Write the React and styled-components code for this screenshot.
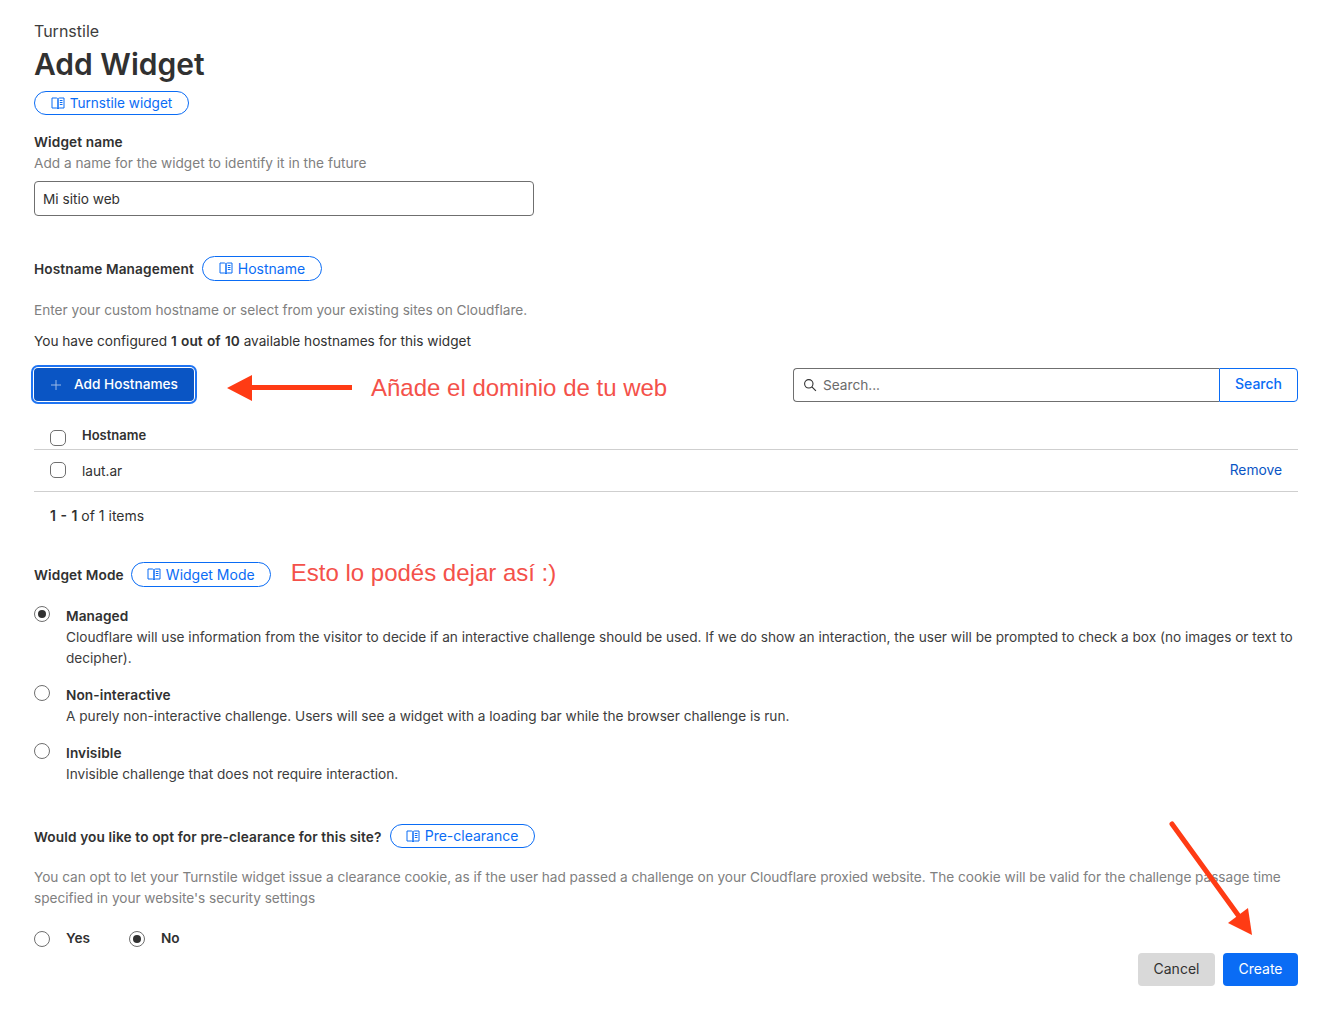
import React from "react";
import styled, { createGlobalStyle } from "styled-components";

const GlobalStyle = createGlobalStyle`
  html, body {
    margin: 0;
    padding: 0;
    background: #fff;
  }
  body {
    font-family: Inter, "Liberation Sans", sans-serif;
    font-size: 13.65px;
    line-height: 21px;
    color: #313131;
  }
`;

const Page = styled.main`
  position: relative;
  width: 1331px;
  height: 1015px;
  box-sizing: border-box;
  padding: 21px 33px 0 34px;
  overflow: hidden;
`;

const Crumb = styled.div`
  font-size: 16px;
  line-height: 20px;
  color: #3d3d3d;
`;

const Title = styled.h1`
  margin: 1px 0 0;
  font-size: 30px;
  line-height: 44px;
  font-weight: 600;
  color: #313131;
`;

const Pill = styled.a`
  display: inline-flex;
  align-items: center;
  justify-content: center;
  gap: 5px;
  box-sizing: border-box;
  height: ${(p) => p.$h || 24}px;
  width: ${(p) => p.$w}px;
  flex: none;
  padding-bottom: ${(p) => (p.$size ? 0 : 1)}px;
  border: 1px solid #0a6cf5;
  border-radius: 13px;
  font-size: ${(p) => p.$size || 14}px;
  color: #0a6cf5;
`;

const DocsRow = styled.div`
  display: flex;
  margin-top: 5px;
`;

const FieldLabel = styled.div`
  margin-top: 17px;
  font-weight: 600;
  letter-spacing: 0.13px;
  line-height: 21px;
`;

const Muted = styled.p`
  margin: ${(p) => p.$top || 0}px 0 0;
  color: #808080;
  letter-spacing: ${(p) => (p.$tight ? "-0.03px" : "0")};
  line-height: 21px;
`;

const NameInput = styled.div`
  display: flex;
  align-items: center;
  box-sizing: border-box;
  width: 500px;
  height: 35px;
  margin-top: 7px;
  padding: 1px 8px 0;
  border: 1px solid #6f6f6f;
  border-radius: 4px;
`;

const SectionHead = styled.div`
  display: flex;
  align-items: center;
  gap: ${(p) => p.$gap || 8}px;
  margin-top: ${(p) => p.$top}px;
`;

const SectionTitle = styled.span`
  font-weight: 600;
  letter-spacing: 0.13px;
  position: relative;
  top: 1px;
`;

const Plain = styled.p`
  margin: 10px 0 0;
  color: #313131;
  strong {
    font-weight: 600;
    word-spacing: 1px;
  }
`;

const Toolbar = styled.div`
  display: flex;
  align-items: flex-start;
  margin-top: 16px;
`;

const AddButton = styled.button`
  display: flex;
  align-items: center;
  flex: none;
  box-sizing: border-box;
  width: 160px;
  height: 33px;
  padding: 0 0 0 16px;
  border: 0;
  border-radius: 4px;
  box-shadow: 0 0 0 1px #fff, 0 0 0 3px #1f74f2;
  background: #0a55c4;
  color: #fff;
  font: 500 13.65px/21px Inter, sans-serif;
  gap: 12px;
`;

const PlusMark = styled.span`
  display: flex;
  opacity: 0.6;
`;

const LeftArrow = styled.svg`
  display: block;
  flex: none;
  margin: 7px 0 0 33px;
`;

const Note = styled.span`
  font-family: "Liberation Sans", Arial, sans-serif;
  font-size: 24px;
  line-height: 30px;
  color: #f4514a;
  white-space: nowrap;
  margin: ${(p) => p.$margin};
`;

const SearchGroup = styled.div`
  display: flex;
  width: 505px;
  height: 34px;
  margin-left: auto;
`;

const SearchField = styled.div`
  display: flex;
  align-items: center;
  flex: 1;
  gap: 6px;
  padding-left: 9px;
  border: 1px solid #6f6f6f;
  border-right: 0;
  border-radius: 4px 0 0 4px;
  color: #6b6b6b;
`;

const SearchButton = styled.button`
  box-sizing: border-box;
  width: 79px;
  height: 34px;
  padding: 0 0 3px;
  background: #fff;
  border: 1px solid #0a6cf5;
  border-radius: 0 4px 4px 0;
  color: #0a6cf5;
  font: 500 14px/21px Inter, sans-serif;
`;

const TableRow = styled.div`
  display: flex;
  align-items: center;
  box-sizing: border-box;
  height: ${(p) => p.$h}px;
  margin-top: ${(p) => p.$top || 0}px;
  padding: ${(p) => p.$pad || 0}px 16px 0;
  border-bottom: 1px solid #cfcfcf;
`;

const Check = styled.span`
  display: block;
  box-sizing: border-box;
  width: 16px;
  height: 16px;
  flex: none;
  border: 1px solid #6f6f6f;
  border-radius: 5px;
  margin-right: 16px;
  position: relative;
  top: ${(p) => p.$shift || 0}px;
`;

const HeadCell = styled.span`
  font-size: 13px;
  font-weight: 600;
  color: #313131;
`;

const RemoveLink = styled.a`
  margin: 0 0 1px auto;
  font-size: 13.8px;
  color: #0a55c4;
`;

const Pager = styled.div`
  margin: 13px 0 0 16px;
  font-size: 14px;
  strong {
    font-weight: 600;
    word-spacing: 1px;
  }
`;

const RadioList = styled.div`
  display: flex;
  flex-direction: column;
  gap: 16px;
  margin-top: 19px;
`;

const RadioItem = styled.div`
  display: flex;
  gap: 16px;
`;

const RadioDot = styled.span`
  display: flex;
  align-items: center;
  justify-content: center;
  box-sizing: border-box;
  width: 16px;
  height: 16px;
  flex: none;
  border: 1px solid #6f6f6f;
  border-radius: 50%;
  &::after {
    content: "";
    display: ${(p) => (p.$on ? "block" : "none")};
    width: 8px;
    height: 8px;
    border-radius: 50%;
    background: #313131;
  }
`;

const RadioLabel = styled.div`
  font-weight: 600;
  letter-spacing: 0.1px;
`;

const RadioText = styled.div`
  line-height: 21px;
  letter-spacing: -0.01px;
  color: #3d3d3d;
`;

const FootRow = styled.div`
  display: flex;
  align-items: flex-start;
  margin-top: 19px;
`;

const InlineRadio = styled.label`
  display: flex;
  align-items: center;
  gap: 16px;
  margin-right: 39px;
  height: 21px;
  font-weight: 600;
`;

const Actions = styled.div`
  display: flex;
  gap: 8px;
  margin: 25px 0 0 auto;
`;

const ActionButton = styled.button`
  box-sizing: border-box;
  width: ${(p) => p.$w}px;
  height: 33px;
  padding: 0 0 2px;
  border: 0;
  border-radius: 4px;
  background: ${(p) => (p.$primary ? "#0a6cf5" : "#d9d9d9")};
  color: ${(p) => (p.$primary ? "#fff" : "#313131")};
  font: 400 14px/21px Inter, sans-serif;
`;

const DownArrow = styled.svg`
  position: absolute;
  left: 1160px;
  top: 815px;
`;

function BookIcon() {
  return (
    <svg width="14" height="14" viewBox="0 0 14 14" fill="none" stroke="currentColor" strokeWidth="1">
      <path d="M1 2h4.2c.9 0 1.8.5 1.8 1.3V13c0-.6-.9-1-1.8-1H1z" />
      <path d="M13 2H8.8C7.9 2 7 2.5 7 3.3V13c0-.6.9-1 1.8-1H13z" />
      <path d="M8.8 4.5h2.7M8.8 6.5h2.7M8.8 8.5h2.7" />
    </svg>
  );
}

function SearchIcon() {
  return (
    <svg width="14" height="14" viewBox="0 0 14 14" fill="none" stroke="#313131" strokeWidth="1.1">
      <circle cx="5.8" cy="5.8" r="4.2" />
      <path d="M8.9 8.9l4 4" />
    </svg>
  );
}

function Docs({ w, h, size, children }) {
  return (
    <Pill $w={w} $h={h} $size={size}>
      <BookIcon />
      {children}
    </Pill>
  );
}

export default function App() {
  return (
    <Page>
      <GlobalStyle />
      <Crumb>Turnstile</Crumb>
      <Title>Add Widget</Title>
      <DocsRow>
        <Docs w={155} size={13.6}>Turnstile widget</Docs>
      </DocsRow>

      <FieldLabel>Widget name</FieldLabel>
      <Muted>Add a name for the widget to identify it in the future</Muted>
      <NameInput>Mi sitio web</NameInput>

      <SectionHead $top={40}>
        <SectionTitle>Hostname Management</SectionTitle>
        <Docs w={120} h={25}>Hostname</Docs>
      </SectionHead>
      <Muted $top={19}>Enter your custom hostname or select from your existing sites on Cloudflare.</Muted>
      <Plain>
        You have configured <strong>1 out of 10</strong> available hostnames for this widget
      </Plain>

      <Toolbar>
        <AddButton>
          <PlusMark>
            <svg width="12" height="12" viewBox="0 0 12 12" stroke="#fff" strokeWidth="1">
              <path d="M6 1v10M1 6h10" />
            </svg>
          </PlusMark>
          Add Hostnames
        </AddButton>
        <LeftArrow width="126" height="26" viewBox="0 0 126 26">
          <path d="M0 13L25 0v10h100v5H25v11z" fill="#ff3b14" />
        </LeftArrow>
        <Note $margin="5px 0 0 18px">Añade el dominio de tu web</Note>
        <SearchGroup>
          <SearchField>
            <SearchIcon />
            Search...
          </SearchField>
          <SearchButton>Search</SearchButton>
        </SearchGroup>
      </Toolbar>

      <TableRow $h={28} $top={19}>
        <Check $shift={2} />
        <HeadCell>Hostname</HeadCell>
      </TableRow>
      <TableRow $h={42} $pad={1}>
        <Check $shift={-1} />
        laut.ar
        <RemoveLink>Remove</RemoveLink>
      </TableRow>
      <Pager>
        <strong>1 - 1</strong> of 1 items
      </Pager>

      <SectionHead $top={36} $gap={7}>
        <SectionTitle>Widget Mode</SectionTitle>
        <Docs w={140} h={25}>Widget Mode</Docs>
        <Note $margin="-6px 0 -3px 13px">Esto lo podés dejar así :)</Note>
      </SectionHead>

      <RadioList>
        <RadioItem>
          <RadioDot $on />
          <div>
            <RadioLabel>Managed</RadioLabel>
            <RadioText>
              Cloudflare will use information from the visitor to decide if an interactive challenge should be used. If we do show an interaction, the user will be prompted to check a box (no images or text to decipher).
            </RadioText>
          </div>
        </RadioItem>
        <RadioItem>
          <RadioDot />
          <div>
            <RadioLabel>Non-interactive</RadioLabel>
            <RadioText>A purely non-interactive challenge. Users will see a widget with a loading bar while the browser challenge is run.</RadioText>
          </div>
        </RadioItem>
        <RadioItem>
          <RadioDot />
          <div>
            <RadioLabel>Invisible</RadioLabel>
            <RadioText>Invisible challenge that does not require interaction.</RadioText>
          </div>
        </RadioItem>
      </RadioList>

      <SectionHead $top={39}>
        <SectionTitle>Would you like to opt for pre-clearance for this site?</SectionTitle>
        <Docs w={145}>Pre-clearance</Docs>
      </SectionHead>
      <Muted $top={19} $tight>
        You can opt to let your Turnstile widget issue a clearance cookie, as if the user had passed a challenge on your Cloudflare proxied website. The cookie will be valid for the challenge passage time specified in your website's security settings
      </Muted>

      <FootRow>
        <InlineRadio>
          <RadioDot />
          Yes
        </InlineRadio>
        <InlineRadio>
          <RadioDot $on />
          No
        </InlineRadio>
        <Actions>
          <ActionButton $w={77}>Cancel</ActionButton>
          <ActionButton $w={75} $primary>Create</ActionButton>
        </Actions>
      </FootRow>

      <DownArrow width="100" height="125" viewBox="0 0 100 125">
        <path d="M12 9L78 100" stroke="#ff3b14" strokeWidth="5" strokeLinecap="round" />
        <path d="M68 108L88 93L92 120z" fill="#ff3b14" />
      </DownArrow>
    </Page>
  );
}
